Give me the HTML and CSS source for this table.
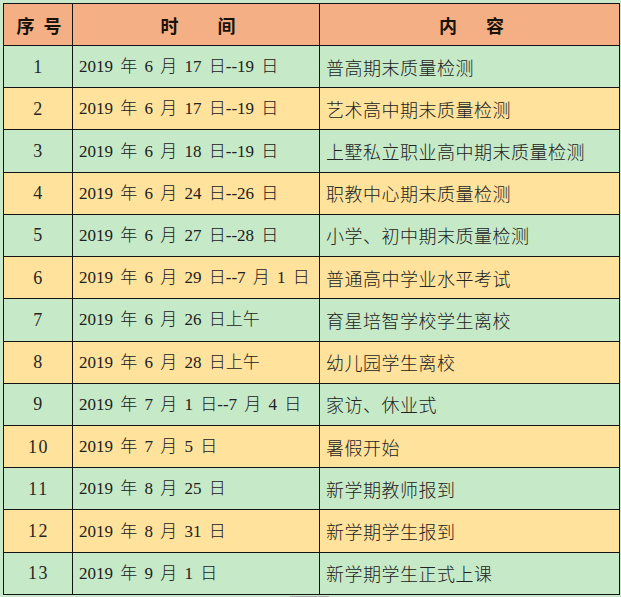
FILE: index.html
```html
<!DOCTYPE html>
<html lang="zh-CN">
<head>
<meta charset="utf-8">
<title>日程安排</title>
<link rel="stylesheet" href="styles.css">
</head>
<body>
<div class="sheet">
  <div class="grid">
    <div class="cell head"><span>序</span><span>号</span></div>
    <div class="cell head head-time"><span>时</span><span>间</span></div>
    <div class="cell head head-content"><span>内</span><span>容</span></div>

    <div class="cell num green">1</div>
    <div class="cell time green">2019 年 6 月 17 日--19 日</div>
    <div class="cell text green">普高期末质量检测</div>

    <div class="cell num yellow">2</div>
    <div class="cell time yellow">2019 年 6 月 17 日--19 日</div>
    <div class="cell text yellow">艺术高中期末质量检测</div>

    <div class="cell num green">3</div>
    <div class="cell time green">2019 年 6 月 18 日--19 日</div>
    <div class="cell text green">上墅私立职业高中期末质量检测</div>

    <div class="cell num yellow">4</div>
    <div class="cell time yellow">2019 年 6 月 24 日--26 日</div>
    <div class="cell text yellow">职教中心期末质量检测</div>

    <div class="cell num green">5</div>
    <div class="cell time green">2019 年 6 月 27 日--28 日</div>
    <div class="cell text green">小学、初中期末质量检测</div>

    <div class="cell num yellow">6</div>
    <div class="cell time yellow">2019 年 6 月 29 日--7 月 1 日</div>
    <div class="cell text yellow">普通高中学业水平考试</div>

    <div class="cell num green">7</div>
    <div class="cell time green">2019 年 6 月 26 日上午</div>
    <div class="cell text green">育星培智学校学生离校</div>

    <div class="cell num yellow">8</div>
    <div class="cell time yellow">2019 年 6 月 28 日上午</div>
    <div class="cell text yellow">幼儿园学生离校</div>

    <div class="cell num green">9</div>
    <div class="cell time green">2019 年 7 月 1 日--7 月 4 日</div>
    <div class="cell text green">家访、休业式</div>

    <div class="cell num yellow">10</div>
    <div class="cell time yellow">2019 年 7 月 5 日</div>
    <div class="cell text yellow">暑假开始</div>

    <div class="cell num green">11</div>
    <div class="cell time green">2019 年 8 月 25 日</div>
    <div class="cell text green">新学期教师报到</div>

    <div class="cell num yellow">12</div>
    <div class="cell time yellow">2019 年 8 月 31 日</div>
    <div class="cell text yellow">新学期学生报到</div>

    <div class="cell num green">13</div>
    <div class="cell time green">2019 年 9 月 1 日</div>
    <div class="cell text green">新学期学生正式上课</div>
  </div>
  <div class="scrollmark"></div>
</div>
</body>
</html>
```

FILE: styles.css
```css
html, body {
  margin: 0;
  padding: 0;
}

body {
  width: 621px;
  height: 597px;
  overflow: hidden;
  background: #c8eacb;
  color: #1c1c1c;
  font-family: "Liberation Serif", "Noto Sans CJK SC", serif;
}

.sheet {
  padding: 3px 0 0 3px;
}

.grid {
  display: grid;
  grid-template-columns: 69px 247px 300px;
  grid-template-rows: 42px repeat(13, 42.23px);
  width: 616px;
  border-top: 1px solid #141414;
  border-left: 1px solid #141414;
}

.cell {
  box-sizing: border-box;
  border-right: 1px solid #141414;
  border-bottom: 1px solid #141414;
  display: flex;
  align-items: center;
  white-space: nowrap;
  line-height: 1;
}

.head {
  background: #f4b084;
  justify-content: center;
  gap: 9px;
  font-family: "Noto Sans CJK SC", sans-serif;
  font-weight: 700;
  font-size: 18px;
  color: #1a1208;
  padding-left: 2px;
}

.head-time {
  gap: 39px;
  padding-left: 4px;
}

.head-content {
  gap: 29px;
  padding-left: 4px;
}

.green {
  background: #c6e9c8;
}

.yellow {
  background: #ffe29b;
}

.num {
  justify-content: center;
  font-size: 18px;
  letter-spacing: 1.5px;
  padding-left: 1px;
  color: #262626;
}

.time {
  padding-left: 6px;
  font-size: 17px;
  font-weight: 300;
  word-spacing: 3px;
  font-family: "Liberation Serif", "Noto Sans CJK SC", serif;
  color: #202020;
}

.text {
  padding-left: 6px;
  font-family: "Noto Sans CJK SC", sans-serif;
  font-weight: 300;
  font-size: 18px;
  letter-spacing: 0.5px;
  color: #222;
}

.scrollmark {
  margin-left: 287px;
  width: 39px;
  height: 2px;
  margin-top: 1px;
  background: #a9b3ab;
}
```
